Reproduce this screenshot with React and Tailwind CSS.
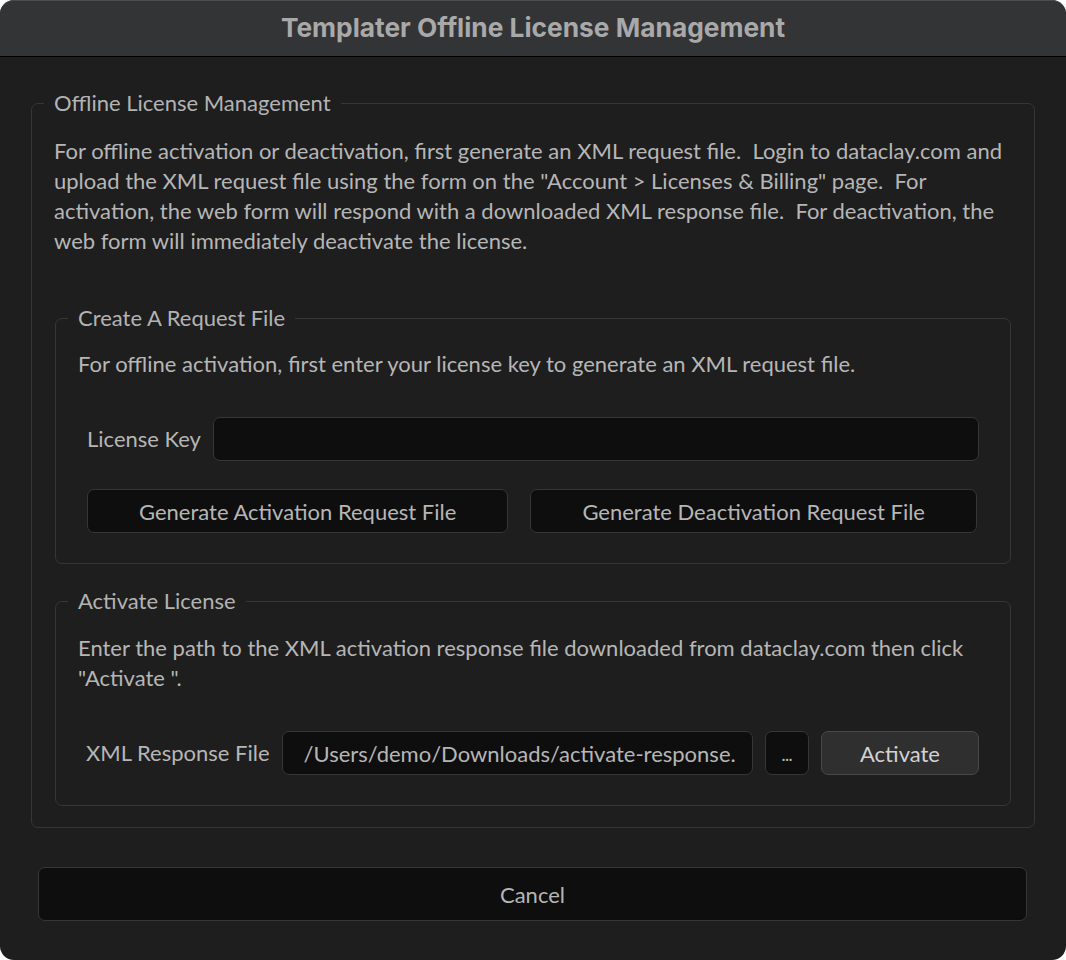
import React from "react";

const body = { fontFamily: '"Lato", "Liberation Sans", sans-serif' };

function Group({ title, children, className = "" }) {
  return (
    <fieldset
      className={
        "border border-[#363636] rounded-[7px] px-[23px] min-w-0 " + className
      }
    >
      <legend className="ml-[-11px] px-[10px] text-[22px] leading-[30px] text-[#b3b3b3]">
        {title}
      </legend>
      {children}
    </fieldset>
  );
}

export default function App() {
  return (
    <div className="w-[1066px] h-[960px] bg-white" style={body}>
      <div className="w-[1066px] h-[960px] rounded-[14px] overflow-hidden bg-[#1e1e1e] flex flex-col">
        <div className="h-[57px] shrink-0 bg-[#333436] border-t border-[#4d4d50] border-b border-b-black flex items-center justify-center rounded-t-[14px]">
          <span
            className="text-[26.3px] font-bold text-[#a9a9a9] leading-none"
            style={{ fontFamily: '"Inter", "Liberation Sans", sans-serif' }}
          >
            Templater Offline License Management
          </span>
        </div>

        <div className="flex flex-col pl-[31px] pr-[31px] pt-[31px]">
          <Group title="Offline License Management" className="pt-[18px] pb-[21px]">
            <p className="text-[22px] leading-[30px] text-[#b6b6b6] whitespace-pre ml-[-1px]">
              {"For offline activation or deactivation, first generate an XML request file.  Login to dataclay.com and\nupload the XML request file using the form on the \"Account > Licenses & Billing\" page.  For\nactivation, the web form will respond with a downloaded XML response file.  For deactivation, the\nweb form will immediately deactivate the license."}
            </p>

            <Group title="Create A Request File" className="mt-[47px] pt-[16px] pb-[30px]">
              <p className="text-[22px] leading-[30px] text-[#b6b6b6] whitespace-pre ml-[-1px]">
                For offline activation, first enter your license key to generate an XML request file.
              </p>
              <div className="flex items-center gap-[12px] mt-[38px] ml-[8px] mr-[8px]">
                <span className="text-[22px] leading-[30px] text-[#b6b6b6] whitespace-nowrap">License Key</span>
                <div className="flex-1 h-[44px] bg-[#0e0e0e] border border-[#363636] rounded-[7px]" />
              </div>
              <div className="flex gap-[22px] mt-[28px] ml-[8px] mr-[10px]">
                <button className="flex-auto h-[44px] bg-[#0e0e0e] border border-[#363636] rounded-[7px] text-[22px] text-[#b6b6b6] whitespace-nowrap">
                  Generate Activation Request File
                </button>
                <button className="flex-auto h-[44px] bg-[#0e0e0e] border border-[#363636] rounded-[7px] text-[22px] text-[#b6b6b6] whitespace-nowrap">
                  Generate Deactivation Request File
                </button>
              </div>
            </Group>

            <Group title="Activate License" className="mt-[22px] pt-[17px] pb-[30px]">
              <p className="text-[22px] leading-[30px] text-[#b6b6b6] whitespace-pre ml-[-1px]">
                {"Enter the path to the XML activation response file downloaded from dataclay.com then click\n\"Activate \"."}
              </p>
              <div className="flex items-center gap-[12px] mt-[38px] ml-[7px] mr-[8px]">
                <span className="text-[22px] leading-[30px] text-[#b6b6b6] whitespace-nowrap">XML Response File</span>
                <div className="flex-1 min-w-0 h-[44px] bg-[#0e0e0e] border border-[#363636] rounded-[7px] flex items-center pl-[21px] overflow-hidden">
                  <span className="text-[22px] text-[#b6b6b6] whitespace-nowrap">
                    /Users/demo/Downloads/activate-response.
                  </span>
                </div>
                <button className="w-[44px] h-[44px] shrink-0 bg-[#0e0e0e] border border-[#363636] rounded-[7px] text-[15px] font-bold text-[#b6b6b6] flex items-end justify-center pb-[11px] leading-none">
                  ...
                </button>
                <button className="w-[158px] h-[44px] shrink-0 bg-[#2f2f2f] border border-[#484848] rounded-[7px] text-[22px] text-[#d2d2d2]">
                  Activate
                </button>
              </div>
            </Group>
          </Group>
        </div>

        <div className="pl-[38px] pr-[39px] mt-[39px]">
          <button className="w-full h-[54px] bg-[#0e0e0e] border border-[#363636] rounded-[7px] text-[22px] text-[#b6b6b6]">
            Cancel
          </button>
        </div>
      </div>
    </div>
  );
}
